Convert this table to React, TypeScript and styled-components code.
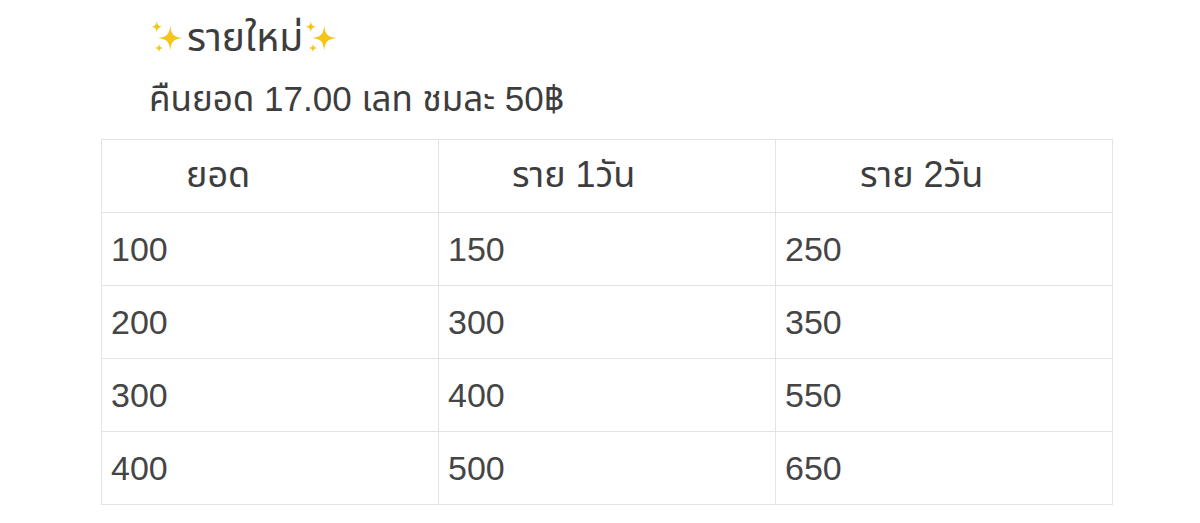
import React from "react";
import styled, { createGlobalStyle } from "styled-components";

const GlobalStyle = createGlobalStyle`
  body {
    margin: 0;
    background: #ffffff;
    font-family: "Liberation Sans", "Noto Sans", "Noto Sans Thai", sans-serif;
    color: #3d3d3d;
  }
`;

const Page = styled.div`
  width: 1200px;
  height: 523px;
  overflow: hidden;
  padding: 13px 0 0 101px;
  box-sizing: border-box;
`;

const Intro = styled.div`
  padding-left: 48px;
  display: flex;
  flex-direction: column;
  gap: 16px;
  margin-bottom: 20px;
`;

const Title = styled.div`
  display: flex;
  align-items: center;
  font-size: 39px;
  line-height: 50px;
  height: 50px;
`;

const Line = styled.div`
  font-size: 35px;
  line-height: 40px;
`;

const Table = styled.table`
  width: 1012px;
  border-collapse: collapse;
  table-layout: fixed;
`;

const Head = styled.th<{ $pad: number }>`
  height: 72px;
  border: 1px solid #e3e3e3;
  text-align: left;
  font-weight: normal;
  font-size: 36px;
  padding: 0 0 0 ${(p) => p.$pad}px;
`;

const Cell = styled.td`
  height: 72px;
  border: 1px solid #e3e3e3;
  font-size: 34px;
  padding: 0 0 0 9px;
  color: #454545;
`;

const Sparkle = () => (
  <svg width="38" height="38" viewBox="0 0 34 34">
    <path d="M19 6 C20 14 22 16 30 17 C22 18 20 20 19 28 C18 20 16 18 8 17 C16 16 18 14 19 6Z" fill="#f5c518" />
    <path d="M7 2 C7.5 5.5 8.5 6.5 12 7 C8.5 7.5 7.5 8.5 7 12 C6.5 8.5 5.5 7.5 2 7 C5.5 6.5 6.5 5.5 7 2Z" fill="#f5c518" />
    <path d="M9 22 C9.4 25 10 25.6 13 26 C10 26.4 9.4 27 9 30 C8.6 27 8 26.4 5 26 C8 25.6 8.6 25 9 22Z" fill="#f5c518" />
  </svg>
);

const rows = [
  ["100", "150", "250"],
  ["200", "300", "350"],
  ["300", "400", "550"],
  ["400", "500", "650"],
];

export default function App() {
  return (
    <>
      <GlobalStyle />
      <Page>
        <Intro>
          <Title>
            <Sparkle />
            รายใหม่
            <Sparkle />
          </Title>
          <Line>คืนยอด 17.00 เลท ชมละ 50฿</Line>
        </Intro>
        <Table>
          <thead>
            <tr>
              <Head $pad={84}>ยอด</Head>
              <Head $pad={73}>ราย 1วัน</Head>
              <Head $pad={84}>ราย 2วัน</Head>
            </tr>
          </thead>
          <tbody>
            {rows.map((r, i) => (
              <tr key={i}>
                {r.map((c, j) => (
                  <Cell key={j}>{c}</Cell>
                ))}
              </tr>
            ))}
          </tbody>
        </Table>
      </Page>
    </>
  );
}
